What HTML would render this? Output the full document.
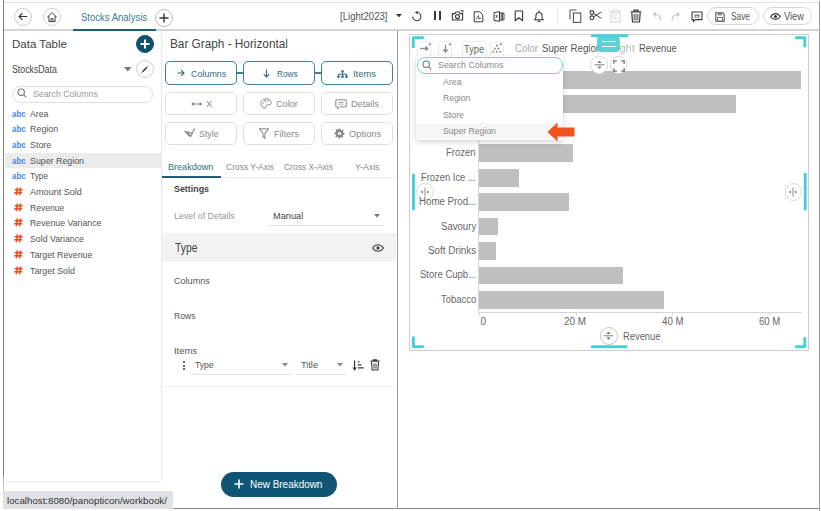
<!DOCTYPE html>
<html><head><meta charset="utf-8"><style>
html,body{margin:0;padding:0;}
body{width:821px;height:511px;position:relative;overflow:hidden;background:#fff;font-family:"Liberation Sans", sans-serif;}
.a{position:absolute;white-space:nowrap;box-sizing:content-box;}
svg.a{overflow:visible;}
</style></head><body>
<div class="a" style="left:4px;top:2px;width:815px;height:1px;background:#e4e4e4;"></div>
<div class="a" style="left:3px;top:0px;width:1px;height:477px;background:#7c7c7c;"></div>
<div class="a" style="left:3px;top:477px;width:1px;height:15px;background:#bdbdbd;"></div>
<div class="a" style="left:819px;top:1px;width:1px;height:510px;background:#9e9e9e;"></div>
<div class="a" style="left:173px;top:508px;width:647px;height:1px;background:#8a8a8a;"></div>
<div class="a" style="left:4px;top:29px;width:815px;height:2px;background:#d4d4d4;"></div>
<div class="a" style="left:13.50px;top:7.70px;width:16.00px;height:16.00px;border:1px solid #cfcfcf;border-radius:50%;background:#fff;"></div>
<div class="a" style="left:42.50px;top:7.70px;width:16.00px;height:16.00px;border:1px solid #cfcfcf;border-radius:50%;background:#fff;"></div>
<div class="a" style="left:155.00px;top:8.50px;width:16.00px;height:16.00px;border:1px solid #bbb;border-radius:50%;background:#fff;"></div>
<svg class="a" style="left:17px;top:11px;" width="12" height="11" viewBox="0 0 12 11"><path d="M2 5.5H10.2M5.4 2.2L2 5.5L5.4 8.8" stroke="#333" stroke-width="1.1" fill="none"/></svg>
<svg class="a" style="left:45.5px;top:11px;" width="12" height="12" viewBox="0 0 12 12"><path d="M1.2 6.4L6 1.6L10.8 6.4M2.9 4.9V10.6H9.1V4.9M5 10.6V7.6H7V10.6" stroke="#333" stroke-width=".9" fill="none"/></svg>
<svg class="a" style="left:158px;top:11.5px;" width="12" height="12" viewBox="0 0 12 12"><path d="M6 1.5V10.5M1.5 6H10.5" stroke="#333" stroke-width="1.4" fill="none"/></svg>
<div class="a" style="left:81.20px;top:13px;font-size:10px;line-height:10px;color:#3b7a92;font-weight:normal;transform:scaleX(0.9515);transform-origin:0 0;">Stocks Analysis</div>
<div class="a" style="left:73px;top:29px;width:83px;height:2px;background:#1f5f78;"></div>
<div class="a" style="left:339.50px;top:12px;font-size:10px;line-height:10px;color:#555;font-weight:normal;transform:scaleX(0.9598);transform-origin:0 0;">[Light2023]</div>
<svg class="a" style="left:396px;top:13.8px;" width="6" height="3.2" viewBox="0 0 6 3.2"><path d="M0 0H6L3 3.2Z" fill="#333"/></svg>
<div class="a" style="left:730.60px;top:12px;font-size:10px;line-height:10px;color:#555;font-weight:normal;transform:scaleX(0.8337);transform-origin:0 0;">Save</div>
<div class="a" style="left:784.00px;top:12px;font-size:10px;line-height:10px;color:#555;font-weight:normal;transform:scaleX(0.9294);transform-origin:0 0;">View</div>
<div class="a" style="left:707.4px;top:7.3px;width:49.2px;height:16px;border:1px solid #d6d6d6;border-radius:9px;"></div>
<div class="a" style="left:762.9px;top:7.3px;width:47.4px;height:16px;border:1px solid #d6d6d6;border-radius:9px;"></div>
<div class="a" style="left:161px;top:31px;width:1px;height:450px;background:#e8e8e8;"></div>
<div class="a" style="left:12.25px;top:39px;font-size:11.5px;line-height:11.5px;color:#444;font-weight:normal;transform:scaleX(1.0032);transform-origin:0 0;">Data Table</div>
<div class="a" style="left:135.80px;top:34.90px;width:16.00px;height:16.00px;border:1px solid #11506b;border-radius:50%;background:#11506b;"></div>
<svg class="a" style="left:139px;top:38px;" width="12" height="12" viewBox="0 0 12 12"><path d="M6 1.5V10.5M1.5 6H10.5" stroke="#fff" stroke-width="2" fill="none"/></svg>
<div class="a" style="left:11.70px;top:65px;font-size:10px;line-height:10px;color:#444;font-weight:normal;transform:scaleX(0.8760);transform-origin:0 0;">StocksData</div>
<svg class="a" style="left:123.8px;top:66.5px;" width="7.6" height="4.4" viewBox="0 0 7.6 4.4"><path d="M0 0H7.6L3.8 4.4Z" fill="#777"/></svg>
<div class="a" style="left:135.70px;top:60.00px;width:16.00px;height:16.00px;border:1px solid #cfcfcf;border-radius:50%;background:#fff;"></div>
<svg class="a" style="left:139px;top:63px;" width="12" height="12" viewBox="0 0 12 12"><path d="M2 10.2L9.4 2.8" stroke="#555" stroke-width=".8"/><path d="M3.8 8.4L7.6 4.6" stroke="#333" stroke-width="1.4"/></svg>
<div class="a" style="left:12px;top:85.5px;width:139px;height:15px;border:1px solid #dedede;border-radius:9px;"></div>
<svg class="a" style="left:17px;top:88px;" width="10" height="10" viewBox="0 0 10 10"><circle cx="4.2" cy="4.2" r="3.2" stroke="#777" stroke-width="1.1" fill="none"/><path d="M6.6 6.6L9.3 9.3" stroke="#777" stroke-width="1.1"/></svg>
<div class="a" style="left:32.70px;top:89px;font-size:9.5px;line-height:9.5px;color:#9a9a9a;font-weight:normal;transform:scaleX(0.9228);transform-origin:0 0;">Search Columns</div>
<div class="a" style="left:5px;top:153px;width:156px;height:15px;background:#ebebeb;"></div>
<div class="a" style="left:11.90px;top:110px;font-size:9px;line-height:9px;color:#4a86e8;font-weight:bold;transform:scaleX(0.8899);transform-origin:0 0;">abc</div>
<div class="a" style="left:30.00px;top:109px;font-size:9.5px;line-height:9.5px;color:#555;font-weight:normal;transform:scaleX(0.9166);transform-origin:0 0;">Area</div>
<div class="a" style="left:11.90px;top:125px;font-size:9px;line-height:9px;color:#4a86e8;font-weight:bold;transform:scaleX(0.8899);transform-origin:0 0;">abc</div>
<div class="a" style="left:30.00px;top:124px;font-size:9.5px;line-height:9.5px;color:#555;font-weight:normal;transform:scaleX(0.9400);transform-origin:0 0;">Region</div>
<div class="a" style="left:11.90px;top:141px;font-size:9px;line-height:9px;color:#4a86e8;font-weight:bold;transform:scaleX(0.8899);transform-origin:0 0;">abc</div>
<div class="a" style="left:30.00px;top:140px;font-size:9.5px;line-height:9.5px;color:#555;font-weight:normal;transform:scaleX(0.9337);transform-origin:0 0;">Store</div>
<div class="a" style="left:11.90px;top:157px;font-size:9px;line-height:9px;color:#4a86e8;font-weight:bold;transform:scaleX(0.8899);transform-origin:0 0;">abc</div>
<div class="a" style="left:30.00px;top:156px;font-size:9.5px;line-height:9.5px;color:#555;font-weight:normal;transform:scaleX(0.9296);transform-origin:0 0;">Super Region</div>
<div class="a" style="left:11.90px;top:172px;font-size:9px;line-height:9px;color:#4a86e8;font-weight:bold;transform:scaleX(0.8899);transform-origin:0 0;">abc</div>
<div class="a" style="left:30.00px;top:171px;font-size:9.5px;line-height:9.5px;color:#555;font-weight:normal;transform:scaleX(0.8837);transform-origin:0 0;">Type</div>
<svg class="a" style="left:14px;top:187px;" width="9" height="8.5" viewBox="0 0 9 8.5"><path d="M3.4 0.3L2.4 8.2M6.6 0.3L5.6 8.2M0.6 2.7H8.6M0.2 5.7H8.2" stroke="#f24e22" stroke-width="1.6" fill="none"/></svg>
<div class="a" style="left:30.00px;top:187px;font-size:9.5px;line-height:9.5px;color:#555;font-weight:normal;transform:scaleX(0.9541);transform-origin:0 0;">Amount Sold</div>
<svg class="a" style="left:14px;top:203px;" width="9" height="8.5" viewBox="0 0 9 8.5"><path d="M3.4 0.3L2.4 8.2M6.6 0.3L5.6 8.2M0.6 2.7H8.6M0.2 5.7H8.2" stroke="#f24e22" stroke-width="1.6" fill="none"/></svg>
<div class="a" style="left:30.00px;top:203px;font-size:9.5px;line-height:9.5px;color:#555;font-weight:normal;transform:scaleX(0.9046);transform-origin:0 0;">Revenue</div>
<svg class="a" style="left:14px;top:218px;" width="9" height="8.5" viewBox="0 0 9 8.5"><path d="M3.4 0.3L2.4 8.2M6.6 0.3L5.6 8.2M0.6 2.7H8.6M0.2 5.7H8.2" stroke="#f24e22" stroke-width="1.6" fill="none"/></svg>
<div class="a" style="left:30.00px;top:218px;font-size:9.5px;line-height:9.5px;color:#555;font-weight:normal;transform:scaleX(0.9231);transform-origin:0 0;">Revenue Variance</div>
<svg class="a" style="left:14px;top:234px;" width="9" height="8.5" viewBox="0 0 9 8.5"><path d="M3.4 0.3L2.4 8.2M6.6 0.3L5.6 8.2M0.6 2.7H8.6M0.2 5.7H8.2" stroke="#f24e22" stroke-width="1.6" fill="none"/></svg>
<div class="a" style="left:30.00px;top:234px;font-size:9.5px;line-height:9.5px;color:#555;font-weight:normal;transform:scaleX(0.9240);transform-origin:0 0;">Sold Variance</div>
<svg class="a" style="left:14px;top:250px;" width="9" height="8.5" viewBox="0 0 9 8.5"><path d="M3.4 0.3L2.4 8.2M6.6 0.3L5.6 8.2M0.6 2.7H8.6M0.2 5.7H8.2" stroke="#f24e22" stroke-width="1.6" fill="none"/></svg>
<div class="a" style="left:30.00px;top:250px;font-size:9.5px;line-height:9.5px;color:#555;font-weight:normal;transform:scaleX(0.9304);transform-origin:0 0;">Target Revenue</div>
<svg class="a" style="left:14px;top:266px;" width="9" height="8.5" viewBox="0 0 9 8.5"><path d="M3.4 0.3L2.4 8.2M6.6 0.3L5.6 8.2M0.6 2.7H8.6M0.2 5.7H8.2" stroke="#f24e22" stroke-width="1.6" fill="none"/></svg>
<div class="a" style="left:30.00px;top:266px;font-size:9.5px;line-height:9.5px;color:#555;font-weight:normal;transform:scaleX(0.9342);transform-origin:0 0;">Target Sold</div>
<div class="a" style="left:5px;top:481px;width:156px;height:1px;background:#ececec;"></div>
<div class="a" style="left:3px;top:491px;width:170px;height:18px;background:#dfe1e5;"></div>
<div class="a" style="left:7.10px;top:496px;font-size:9.5px;line-height:9.5px;color:#333;font-weight:normal;transform:scaleX(1.0228);transform-origin:0 0;">localhost:8080/panopticon/workbook/</div>
<div class="a" style="left:397px;top:31px;width:1px;height:478px;background:#9a9a9a;"></div>
<div class="a" style="left:169.90px;top:38px;font-size:12px;line-height:12px;color:#444;font-weight:normal;transform:scaleX(0.9821);transform-origin:0 0;">Bar Graph - Horizontal</div>
<div class="a" style="left:164.7px;top:61.1px;width:70px;height:22px;border:1px solid #3f7f97;border-radius:5px;"></div>
<div class="a" style="left:243px;top:61.1px;width:70px;height:22px;border:1px solid #3f7f97;border-radius:5px;"></div>
<div class="a" style="left:320.7px;top:61.1px;width:70px;height:22px;border:1px solid #3f7f97;border-radius:5px;"></div>
<div class="a" style="left:236.7px;top:72px;width:6.3px;height:2px;background:#3f7f97;"></div>
<div class="a" style="left:314.7px;top:72px;width:6px;height:2px;background:#3f7f97;"></div>
<div class="a" style="left:164.7px;top:91.9px;width:70px;height:21px;border:1px solid #e0e0e0;border-radius:5px;"></div>
<div class="a" style="left:243px;top:91.9px;width:70px;height:21px;border:1px solid #e0e0e0;border-radius:5px;"></div>
<div class="a" style="left:320.7px;top:91.9px;width:70px;height:21px;border:1px solid #e0e0e0;border-radius:5px;"></div>
<div class="a" style="left:164.7px;top:122px;width:70px;height:21px;border:1px solid #e0e0e0;border-radius:5px;"></div>
<div class="a" style="left:243px;top:122px;width:70px;height:21px;border:1px solid #e0e0e0;border-radius:5px;"></div>
<div class="a" style="left:320.7px;top:122px;width:70px;height:21px;border:1px solid #e0e0e0;border-radius:5px;"></div>
<div class="a" style="left:191.30px;top:69px;font-size:9.5px;line-height:9.5px;color:#2c6a82;font-weight:normal;transform:scaleX(0.9417);transform-origin:0 0;">Columns</div>
<div class="a" style="left:276.50px;top:69px;font-size:9.5px;line-height:9.5px;color:#2c6a82;font-weight:normal;transform:scaleX(0.8670);transform-origin:0 0;">Rows</div>
<div class="a" style="left:353.00px;top:69px;font-size:9.5px;line-height:9.5px;color:#2c6a82;font-weight:normal;transform:scaleX(0.9859);transform-origin:0 0;">Items</div>
<div class="a" style="left:205.90px;top:99px;font-size:9.5px;line-height:9.5px;color:#888;font-weight:normal;">X</div>
<div class="a" style="left:275.50px;top:99px;font-size:9.5px;line-height:9.5px;color:#888;font-weight:normal;transform:scaleX(0.9645);transform-origin:0 0;">Color</div>
<div class="a" style="left:350.60px;top:99px;font-size:9.5px;line-height:9.5px;color:#888;font-weight:normal;transform:scaleX(0.9573);transform-origin:0 0;">Details</div>
<div class="a" style="left:198.90px;top:129px;font-size:9.5px;line-height:9.5px;color:#888;font-weight:normal;transform:scaleX(0.9281);transform-origin:0 0;">Style</div>
<div class="a" style="left:274.00px;top:129px;font-size:9.5px;line-height:9.5px;color:#888;font-weight:normal;transform:scaleX(0.9629);transform-origin:0 0;">Filters</div>
<div class="a" style="left:348.60px;top:129px;font-size:9.5px;line-height:9.5px;color:#888;font-weight:normal;transform:scaleX(0.9836);transform-origin:0 0;">Options</div>
<div class="a" style="left:168.40px;top:162px;font-size:9.5px;line-height:9.5px;color:#2f6f87;font-weight:normal;transform:scaleX(0.9552);transform-origin:0 0;">Breakdown</div>
<div class="a" style="left:225.70px;top:162px;font-size:9.5px;line-height:9.5px;color:#888;font-weight:normal;transform:scaleX(0.8931);transform-origin:0 0;">Cross Y-Axis</div>
<div class="a" style="left:284.30px;top:162px;font-size:9.5px;line-height:9.5px;color:#888;font-weight:normal;transform:scaleX(0.8909);transform-origin:0 0;">Cross X-Axis</div>
<div class="a" style="left:355.00px;top:162px;font-size:9.5px;line-height:9.5px;color:#888;font-weight:normal;transform:scaleX(0.9220);transform-origin:0 0;">Y-Axis</div>
<div class="a" style="left:162px;top:177px;width:234px;height:1px;background:#ececec;"></div>
<div class="a" style="left:162px;top:176px;width:59px;height:2px;background:#1f5f78;"></div>
<div class="a" style="left:174.40px;top:184px;font-size:9.5px;line-height:9.5px;color:#444;font-weight:bold;transform:scaleX(0.9339);transform-origin:0 0;">Settings</div>
<div class="a" style="left:174.40px;top:211px;font-size:9.5px;line-height:9.5px;color:#999;font-weight:normal;transform:scaleX(0.9361);transform-origin:0 0;">Level of Details</div>
<div class="a" style="left:272.80px;top:211px;font-size:9.5px;line-height:9.5px;color:#444;font-weight:normal;transform:scaleX(0.9692);transform-origin:0 0;">Manual</div>
<div class="a" style="left:268.4px;top:224.6px;width:116px;height:1.2px;background:#e0e0e0;"></div>
<svg class="a" style="left:374px;top:214px;" width="6" height="3.5" viewBox="0 0 6 3.5"><path d="M0 0H6L3 3.5Z" fill="#777"/></svg>
<div class="a" style="left:162px;top:233px;width:234px;height:29px;background:#f2f2f2;"></div>
<div class="a" style="left:174.70px;top:242px;font-size:12px;line-height:12px;color:#444;font-weight:normal;transform:scaleX(0.8649);transform-origin:0 0;">Type</div>
<div class="a" style="left:174.40px;top:276px;font-size:9.5px;line-height:9.5px;color:#555;font-weight:normal;transform:scaleX(0.9550);transform-origin:0 0;">Columns</div>
<div class="a" style="left:174.40px;top:311px;font-size:9.5px;line-height:9.5px;color:#555;font-weight:normal;transform:scaleX(0.9049);transform-origin:0 0;">Rows</div>
<div class="a" style="left:174.40px;top:346px;font-size:9.5px;line-height:9.5px;color:#555;font-weight:normal;transform:scaleX(0.9902);transform-origin:0 0;">Items</div>
<div class="a" style="left:195.30px;top:360px;font-size:9.5px;line-height:9.5px;color:#555;font-weight:normal;transform:scaleX(0.8982);transform-origin:0 0;">Type</div>
<div class="a" style="left:190.8px;top:373.5px;width:101.5px;height:1.2px;background:#e2e2e2;"></div>
<div class="a" style="left:300.70px;top:360px;font-size:9.5px;line-height:9.5px;color:#555;font-weight:normal;transform:scaleX(0.9662);transform-origin:0 0;">Title</div>
<div class="a" style="left:296.2px;top:373.5px;width:51px;height:1.2px;background:#e2e2e2;"></div>
<div class="a" style="left:162px;top:386px;width:235px;height:1px;background:#f0f0f0;"></div>
<div class="a" style="left:221.4px;top:472px;width:116px;height:25px;border-radius:13px;background:#0f5674;"></div>
<svg class="a" style="left:234px;top:479px;" width="10" height="10" viewBox="0 0 10 10"><path d="M5 0.5V9.5M0.5 5H9.5" stroke="#fff" stroke-width="1.6" fill="none"/></svg>
<div class="a" style="left:249.60px;top:480px;font-size:10px;line-height:10px;color:#fff;font-weight:normal;transform:scaleX(0.9944);transform-origin:0 0;">New Breakdown</div>
<div class="a" style="left:409px;top:33.6px;width:397.6px;height:315.5px;border:1px solid #cdcdcd;"></div>
<div class="a" style="left:416.40px;top:182.80px;width:15.40px;height:15.40px;border:1px solid #d8d8d8;border-radius:50%;background:#fff;"></div>
<div class="a" style="left:784.60px;top:183.20px;width:15.40px;height:15.40px;border:1px solid #d8d8d8;border-radius:50%;background:#fff;"></div>
<div class="a" style="left:479px;top:71.0px;width:322px;height:17.8px;background:#bfbfbf;"></div>
<div class="a" style="left:479px;top:95.45px;width:257.2px;height:17.8px;background:#bfbfbf;"></div>
<div class="a" style="left:479px;top:119.9px;width:66px;height:17.8px;background:#bfbfbf;"></div>
<div class="a" style="left:479px;top:144.35px;width:94px;height:17.8px;background:#bfbfbf;"></div>
<div class="a" style="left:446.40px;top:148px;font-size:10px;line-height:10px;color:#666;font-weight:normal;transform:scaleX(0.9512);transform-origin:0 0;">Frozen</div>
<div class="a" style="left:479px;top:168.8px;width:39.8px;height:17.8px;background:#bfbfbf;"></div>
<div class="a" style="left:421.30px;top:173px;font-size:10px;line-height:10px;color:#666;font-weight:normal;transform:scaleX(0.9374);transform-origin:0 0;">Frozen Ice ...</div>
<div class="a" style="left:479px;top:193.25px;width:90px;height:17.8px;background:#bfbfbf;"></div>
<div class="a" style="left:418.90px;top:197px;font-size:10px;line-height:10px;color:#666;font-weight:normal;transform:scaleX(0.9693);transform-origin:0 0;">Home Prod...</div>
<div class="a" style="left:479px;top:217.7px;width:19.3px;height:17.8px;background:#bfbfbf;"></div>
<div class="a" style="left:440.80px;top:222px;font-size:10px;line-height:10px;color:#666;font-weight:normal;transform:scaleX(0.9597);transform-origin:0 0;">Savoury</div>
<div class="a" style="left:479px;top:242.15px;width:17px;height:17.8px;background:#bfbfbf;"></div>
<div class="a" style="left:427.80px;top:246px;font-size:10px;line-height:10px;color:#666;font-weight:normal;transform:scaleX(0.9857);transform-origin:0 0;">Soft Drinks</div>
<div class="a" style="left:479px;top:266.6px;width:143.9px;height:17.8px;background:#bfbfbf;"></div>
<div class="a" style="left:419.90px;top:270px;font-size:10px;line-height:10px;color:#666;font-weight:normal;transform:scaleX(0.9521);transform-origin:0 0;">Store Cupb...</div>
<div class="a" style="left:479px;top:291.05px;width:185.3px;height:17.8px;background:#bfbfbf;"></div>
<div class="a" style="left:440.80px;top:295px;font-size:10px;line-height:10px;color:#666;font-weight:normal;transform:scaleX(0.9450);transform-origin:0 0;">Tobacco</div>
<div class="a" style="left:478px;top:66px;width:1px;height:247px;background:#d6d6d6;"></div>
<div class="a" style="left:478px;top:312px;width:324px;height:1px;background:#d6d6d6;"></div>
<div class="a" style="left:478.5px;top:313px;width:1px;height:2.5px;background:#dadada;"></div>
<div class="a" style="left:480.50px;top:317px;font-size:10px;line-height:10px;color:#666;font-weight:normal;">0</div>
<div class="a" style="left:575.5px;top:313px;width:1px;height:2.5px;background:#dadada;"></div>
<div class="a" style="left:564.00px;top:317px;font-size:10px;line-height:10px;color:#666;font-weight:normal;transform:scaleX(0.9897);transform-origin:0 0;">20 M</div>
<div class="a" style="left:672.4px;top:313px;width:1px;height:2.5px;background:#dadada;"></div>
<div class="a" style="left:662.40px;top:317px;font-size:10px;line-height:10px;color:#666;font-weight:normal;transform:scaleX(0.9717);transform-origin:0 0;">40 M</div>
<div class="a" style="left:769.3px;top:313px;width:1px;height:2.5px;background:#dadada;"></div>
<div class="a" style="left:758.70px;top:317px;font-size:10px;line-height:10px;color:#666;font-weight:normal;transform:scaleX(0.9582);transform-origin:0 0;">60 M</div>
<div class="a" style="left:599.60px;top:326.50px;width:16.00px;height:16.00px;border:1px solid #c8c8c8;border-radius:50%;background:#fff;"></div>
<div class="a" style="left:622.60px;top:332px;font-size:10px;line-height:10px;color:#666;font-weight:normal;transform:scaleX(0.9368);transform-origin:0 0;">Revenue</div>
<div class="a" style="left:515.00px;top:44px;font-size:10px;line-height:10px;color:#aaa;font-weight:normal;transform:scaleX(0.9623);transform-origin:0 0;">Color</div>
<div class="a" style="left:542.40px;top:44px;font-size:10px;line-height:10px;color:#555;font-weight:normal;transform:scaleX(0.9681);transform-origin:0 0;">Super Region</div>
<div class="a" style="left:603.40px;top:44px;font-size:10px;line-height:10px;color:#bbb;font-weight:normal;transform:scaleX(1.1000);transform-origin:0 0;">Height</div>
<div class="a" style="left:639.30px;top:44px;font-size:10px;line-height:10px;color:#555;font-weight:normal;transform:scaleX(0.9418);transform-origin:0 0;">Revenue</div>
<div class="a" style="left:417px;top:41px;width:12.0px;height:16px;border:1px solid #ececec;border-radius:3px;"></div>
<div class="a" style="left:437.8px;top:41px;width:12.7px;height:16px;border:1px solid #ececec;border-radius:3px;"></div>
<div class="a" style="left:461.9px;top:41px;width:22.8px;height:16px;border:1px solid #ececec;border-radius:3px;"></div>
<div class="a" style="left:489.7px;top:41px;width:12.3px;height:16px;border:1px solid #ececec;border-radius:3px;"></div>
<div class="a" style="left:464.20px;top:45px;font-size:10px;line-height:10px;color:#666;font-weight:normal;transform:scaleX(0.9271);transform-origin:0 0;">Type</div>
<div class="a" style="left:590.40px;top:56.20px;width:15.40px;height:15.40px;border:1px solid #d8d8d8;border-radius:50%;background:#fff;"></div>
<div class="a" style="left:609.90px;top:56.20px;width:15.40px;height:15.40px;border:1px solid #d8d8d8;border-radius:50%;background:#fff;"></div>
<svg class="a" style="left:0;top:0" width="821" height="511"><g stroke="#46cfd7" stroke-width="2.9" fill="none" stroke-linecap="round" stroke-linejoin="round"><path d="M422.6 37.8H413.3V46.8M796.4 37.8H804.8V46.2M413.4 337.6V346.7H422.7M804.8 338.4V346.7H796.2M592.2 35.7H627M592.3 346.8H626.2M413.5 175.1V209.1M805.2 174.2V209.2"/></g></svg>
<div class="a" style="left:597.4px;top:36px;width:23.1px;height:16px;border-radius:4.5px;background:#4fcdd5;opacity:.93"></div>
<div class="a" style="left:602px;top:41px;width:14px;height:1.4px;background:#fff;"></div>
<div class="a" style="left:602px;top:45.6px;width:14px;height:1.4px;background:#fff;"></div>
<div class="a" style="left:416px;top:56px;width:147.3px;height:84px;background:#fff;box-shadow:0 2px 6px rgba(0,0,0,.18);"></div>
<div class="a" style="left:416px;top:123.3px;width:147.3px;height:15.7px;background:#f5f5f5;"></div>
<div class="a" style="left:417px;top:56.8px;width:143.8px;height:15.2px;border:1px solid #6dd3d9;border-radius:8px;background:#fff;"></div>
<svg class="a" style="left:422px;top:59.5px;" width="10" height="10" viewBox="0 0 10 10"><circle cx="4.2" cy="4.2" r="3.2" stroke="#777" stroke-width="1.1" fill="none"/><path d="M6.6 6.6L9.3 9.3" stroke="#777" stroke-width="1.1"/></svg>
<div class="a" style="left:438.20px;top:60px;font-size:9.5px;line-height:9.5px;color:#888;font-weight:normal;transform:scaleX(0.9299);transform-origin:0 0;">Search Columns</div>
<div class="a" style="left:442.70px;top:77px;font-size:9.5px;line-height:9.5px;color:#888;font-weight:normal;transform:scaleX(0.9316);transform-origin:0 0;">Area</div>
<div class="a" style="left:442.70px;top:93px;font-size:9.5px;line-height:9.5px;color:#888;font-weight:normal;transform:scaleX(0.9101);transform-origin:0 0;">Region</div>
<div class="a" style="left:442.70px;top:110px;font-size:9.5px;line-height:9.5px;color:#888;font-weight:normal;transform:scaleX(0.9205);transform-origin:0 0;">Store</div>
<div class="a" style="left:442.70px;top:126px;font-size:9.5px;line-height:9.5px;color:#888;font-weight:normal;transform:scaleX(0.9106);transform-origin:0 0;">Super Region</div>
<svg class="a" style="left:547px;top:122px;" width="28" height="20" viewBox="0 0 28 20"><path d="M0.5 10L10.5 0.5V5.5H27.5V14.5H10.5V19.5Z" fill="#f2521f"/></svg>
<svg class="a" style="left:411px;top:10px;" width="12" height="12" viewBox="0 0 12 12"><path d="M6.2 2.5A4.1 4.1 0 1 1 1.7 6.6" stroke="#3a3a3a" stroke-width="1.1" fill="none"/><path d="M3.9 2.5L6.6 0.7V4.3Z" fill="#3a3a3a"/></svg>
<div class="a" style="left:433.8px;top:11.3px;width:2.3px;height:8.3px;background:#3a3a3a;"></div>
<div class="a" style="left:438.6px;top:11.3px;width:2.3px;height:8.3px;background:#3a3a3a;"></div>
<svg class="a" style="left:451px;top:10px;" width="13" height="11" viewBox="0 0 13 11"><path d="M1.4 3.6H4L5 2H8L9 3.6H11.6V10H1.4Z" stroke="#3a3a3a" stroke-width="1.1" fill="none"/><circle cx="6.5" cy="6.6" r="2" stroke="#3a3a3a" stroke-width="1.1" fill="none"/><path d="M9.6 0.8H11.8V2.6" stroke="#3a3a3a" stroke-width="1.1" fill="none"/></svg>
<svg class="a" style="left:472.5px;top:10.5px;" width="11" height="12" viewBox="0 0 11 12"><path d="M1.2 0.8H6.8L9.8 3.8V10.8H1.2Z" stroke="#3a3a3a" stroke-width="1" fill="none"/><path d="M3 8.5L5.5 4.5L6 8L8 7" stroke="#3a3a3a" stroke-width=".8" fill="none"/></svg>
<svg class="a" style="left:492.5px;top:10.5px;" width="12" height="11" viewBox="0 0 12 11"><path d="M1 1.6L6.5 0.6V10.4L1 9.4Z" stroke="#3a3a3a" stroke-width="1" fill="none"/><path d="M6.5 2H11V9H6.5M8.2 2V9M9.6 2V9" stroke="#3a3a3a" stroke-width=".9" fill="none"/><path d="M2.6 3.8L4.6 6.8M4.6 3.8L2.6 6.8" stroke="#3a3a3a" stroke-width=".8"/></svg>
<svg class="a" style="left:513.5px;top:9.5px;" width="10" height="12" viewBox="0 0 10 12"><path d="M1.2 1H8.6V10.8L4.9 7.8L1.2 10.8Z" stroke="#3a3a3a" stroke-width="1.1" fill="none" stroke-linejoin="round"/></svg>
<svg class="a" style="left:532.5px;top:9.5px;" width="12" height="12" viewBox="0 0 12 12"><path d="M1 9.8H11M2.3 9.8C3 8.5 3 7 3 5.5A3 3 0 0 1 9 5.5C9 7 9 8.5 9.7 9.8M6 0.6V2.4M4.8 10.6A1.2 1.2 0 0 0 7.2 10.6" stroke="#3a3a3a" stroke-width="1.1" fill="none"/></svg>
<div class="a" style="left:557px;top:10.3px;width:1px;height:11.7px;background:#e2e2e2;"></div>
<svg class="a" style="left:568.5px;top:8.5px;" width="13" height="14" viewBox="0 0 13 14"><path d="M1 10.5V1H7.5" stroke="#555" stroke-width="1" fill="none"/><rect x="4.4" y="4" width="7.4" height="9.4" stroke="#444" stroke-width="1" fill="none"/></svg>
<svg class="a" style="left:588.5px;top:10px;" width="13" height="10.5" viewBox="0 0 13 10.5"><circle cx="2.9" cy="2.5" r="1.9" stroke="#3a3a3a" stroke-width="1.1" fill="none"/><circle cx="2.9" cy="7.8" r="1.9" stroke="#3a3a3a" stroke-width="1.1" fill="none"/><path d="M4.6 3.4L12.3 8.4M4.6 6.9L12.3 1.9" stroke="#3a3a3a" stroke-width="1" fill="none"/></svg>
<svg class="a" style="left:610px;top:8.5px;" width="11" height="14" viewBox="0 0 11 14"><path d="M2.5 2.5H1V13H10V2.5H8.5" stroke="#d2d2d2" stroke-width="1.1" fill="none"/><rect x="3.2" y="1" width="4.6" height="2.6" stroke="#d2d2d2" stroke-width="1" fill="none"/><path d="M3.2 6H7.5M3.2 8H6.5M3.2 10H7.5" stroke="#d2d2d2" stroke-width=".9"/></svg>
<svg class="a" style="left:629.8px;top:8.5px;" width="12" height="14" viewBox="0 0 12 14"><path d="M0.6 2.8H11.4M4 2.8V1.2H8V2.8" stroke="#3a3a3a" stroke-width="1.3" fill="none"/><path d="M1.8 3.6L2.5 13H9.5L10.2 3.6" stroke="#3a3a3a" stroke-width="1.2" fill="none"/><path d="M4.2 5V11.5M6 5V11.5M7.8 5V11.5" stroke="#3a3a3a" stroke-width=".9"/></svg>
<svg class="a" style="left:651.8px;top:10.5px;" width="10" height="10" viewBox="0 0 10 10"><path d="M8.6 9.6C8.6 6 6.6 3.4 3 3.4" stroke="#c9c9c9" stroke-width="1.2" fill="none"/><path d="M0.6 3.4L4 0.6V6.2Z" fill="#c9c9c9"/></svg>
<svg class="a" style="left:671.4px;top:10.5px;" width="10" height="10" viewBox="0 0 10 10"><path d="M1.2 9.6C1.2 6 3.2 3.4 6.8 3.4" stroke="#c9c9c9" stroke-width="1.2" fill="none"/><path d="M9.2 3.4L5.8 0.6V6.2Z" fill="#c9c9c9"/></svg>
<svg class="a" style="left:690.5px;top:10.5px;" width="12" height="12" viewBox="0 0 12 12"><path d="M1 1H11V8.6H4.2L2.4 10.6V8.6H1Z" stroke="#3a3a3a" stroke-width="1.1" fill="none" stroke-linejoin="round"/><path d="M3.5 4.2H8.5M3.5 6H5.5M6.5 6H8.5" stroke="#3a3a3a" stroke-width="1"/></svg>
<svg class="a" style="left:714.8px;top:11.5px;" width="10" height="10" viewBox="0 0 10 10"><path d="M0.8 0.8H7.6L9.2 2.4V9.2H0.8Z" stroke="#555" stroke-width="1.1" fill="none"/><rect x="2.6" y="0.8" width="4.4" height="2.6" fill="#888"/><rect x="2.6" y="5.4" width="4.8" height="3.8" stroke="#666" stroke-width=".9" fill="none"/></svg>
<svg class="a" style="left:769.8px;top:12.6px;" width="11" height="7" viewBox="0 0 11 7"><path d="M0.6 3.5C2 1.4 3.6 0.6 5.5 0.6C7.4 0.6 9 1.4 10.4 3.5C9 5.6 7.4 6.4 5.5 6.4C3.6 6.4 2 5.6 0.6 3.5Z" stroke="#3a3a3a" stroke-width="1.1" fill="none"/><circle cx="5.5" cy="3.5" r="1.6" fill="#3a3a3a"/></svg>
<svg class="a" style="left:177px;top:69px;" width="8" height="8" viewBox="0 0 8 8"><path d="M0.5 4H7M4.2 1.2L7 4L4.2 6.8" stroke="#2c6a82" stroke-width="1.1" fill="none"/></svg>
<svg class="a" style="left:262.5px;top:69px;" width="7" height="9" viewBox="0 0 7 9"><path d="M3.5 0.5V8M0.7 5.2L3.5 8L6.3 5.2" stroke="#2c6a82" stroke-width="1.1" fill="none"/></svg>
<svg class="a" style="left:337px;top:70px;" width="11" height="8" viewBox="0 0 11 8"><rect x="4.3" y="0.3" width="2.4" height="2.2" fill="#2c6a82"/><path d="M5.5 2.5V4.2M1.5 6V4.2H9.5V6M5.5 4.2V6" stroke="#2c6a82" stroke-width="1" fill="none"/><rect x="0.3" y="5.6" width="2.4" height="2.2" fill="#2c6a82"/><rect x="4.3" y="5.6" width="2.4" height="2.2" fill="#2c6a82"/><rect x="8.3" y="5.6" width="2.4" height="2.2" fill="#2c6a82"/></svg>
<svg class="a" style="left:190.5px;top:100.5px;" width="11.5" height="6" viewBox="0 0 11.5 6"><path d="M1 3H10.5" stroke="#8a8a8a" stroke-width="1.1"/><path d="M0.2 3L2.8 0.8V5.2Z M11.3 3L8.7 0.8V5.2Z" fill="#8a8a8a"/></svg>
<svg class="a" style="left:259.8px;top:98px;" width="12" height="11" viewBox="0 0 12 11"><path d="M6 0.8C3 0.8 0.8 3 0.8 5.6C0.8 8.2 2.8 10.2 5.2 10.2C6.2 10.2 6 8.8 6 8.2C6 7.2 6.8 6.8 7.6 6.8H9C10.4 6.8 11.2 6 11.2 4.8C11.2 2.4 9 0.8 6 0.8Z" stroke="#8a8a8a" stroke-width="1" fill="none"/><circle cx="3.4" cy="5" r=".8" fill="#8a8a8a"/><circle cx="5" cy="2.9" r=".8" fill="#8a8a8a"/><circle cx="7.6" cy="3" r=".8" fill="#8a8a8a"/></svg>
<svg class="a" style="left:335px;top:98.5px;" width="12" height="11" viewBox="0 0 12 11"><path d="M0.8 0.8H11.2V7.8H4.6L2.4 10V7.8H0.8Z" stroke="#8a8a8a" stroke-width="1" fill="none" stroke-linejoin="round"/><path d="M3.6 3.4H8.4M3.6 5.2H5.4M6.6 5.2H8.4" stroke="#8a8a8a" stroke-width=".9"/></svg>
<svg class="a" style="left:183.5px;top:128.2px;" width="12" height="10" viewBox="0 0 12 10"><path d="M0.8 3.4L6.8 8.6L8.4 5.4Z" stroke="#8a8a8a" stroke-width="1.1" fill="none" stroke-linejoin="round"/><path d="M7.4 5.6L10.6 1.2M9.6 0.6L11.2 2" stroke="#8a8a8a" stroke-width="1.1" fill="none"/><path d="M3 5.4L6.4 8" stroke="#8a8a8a" stroke-width="2"/></svg>
<svg class="a" style="left:259px;top:128.2px;" width="10" height="11" viewBox="0 0 10 11"><path d="M0.6 0.8H9.4L6 5.4V10.2L4 8.8V5.4Z" stroke="#8a8a8a" stroke-width="1.1" fill="none" stroke-linejoin="round"/></svg>
<svg class="a" style="left:333.5px;top:128.2px;" width="11" height="11" viewBox="0 0 11 11"><g transform="translate(5.5 5.5)"><path d="M-1 -5.2H1L1.3 -3.6L2.7 -3L4 -4L5.2 -2.6L4.2 -1.4L4.6 0L6 .4V2.4L4.4 2.7L3.8 4L4.8 5.2L3.4 6.3L2.2 5.2L1 5.6L0.8 7.2H-1L-1.3 5.6L-2.6 5L-3.9 6L-5.2 4.6L-4.2 3.4L-4.8 2L-6.2 1.7V-0.3L-4.7 -0.6L-4.1 -2L-5 -3.3L-3.6 -4.6L-2.4 -3.6L-1.2 -4.1Z" transform="scale(.82) translate(0 -1)" fill="#8a8a8a"/><circle cx="0" cy="0" r="1.6" fill="#fff"/></g></svg>
<svg class="a" style="left:371.5px;top:243.5px;" width="12" height="8" viewBox="0 0 12 8"><path d="M0.6 4C2 1.6 3.8 0.7 6 0.7C8.2 0.7 10 1.6 11.4 4C10 6.4 8.2 7.3 6 7.3C3.8 7.3 2 6.4 0.6 4Z" stroke="#444" stroke-width="1.1" fill="none"/><circle cx="6" cy="4" r="1.7" fill="#444"/></svg>
<div class="a" style="left:183px;top:360.70000000000005px;width:2px;height:2px;background:#333;border-radius:1px;"></div>
<div class="a" style="left:183px;top:364.5px;width:2px;height:2px;background:#333;border-radius:1px;"></div>
<div class="a" style="left:183px;top:368.3px;width:2px;height:2px;background:#333;border-radius:1px;"></div>
<svg class="a" style="left:282px;top:363px;" width="6" height="3.5" viewBox="0 0 6 3.5"><path d="M0 0H6L3 3.5Z" fill="#888"/></svg>
<svg class="a" style="left:337px;top:363px;" width="6" height="3.5" viewBox="0 0 6 3.5"><path d="M0 0H6L3 3.5Z" fill="#888"/></svg>
<svg class="a" style="left:351.5px;top:359.5px;" width="12.5" height="11.5" viewBox="0 0 12.5 11.5"><path d="M2.6 0.4V10" stroke="#3a3a3a" stroke-width="1.2"/><path d="M0.4 7.6L2.6 10.8L4.8 7.6Z" fill="#3a3a3a"/><path d="M5.8 1.8H7.4M5.8 4.8H9.4M5.8 7.8H11.8" stroke="#3a3a3a" stroke-width="1.3"/></svg>
<svg class="a" style="left:369.5px;top:359.3px;" width="10" height="12" viewBox="0 0 10 12"><path d="M0.5 2.2H9.5M3.4 2.2V0.8H6.6V2.2" stroke="#3a3a3a" stroke-width="1.2" fill="none"/><path d="M1.5 3L2.1 11H7.9L8.5 3" stroke="#3a3a3a" stroke-width="1.1" fill="none"/><path d="M3.8 4.4V9.6M5 4.4V9.6M6.2 4.4V9.6" stroke="#3a3a3a" stroke-width=".7"/></svg>
<svg class="a" style="left:418.5px;top:42px;" width="13" height="11" viewBox="0 0 13 11"><path d="M1 6.5H8.5" stroke="#8c8c8c" stroke-width="1.3"/><path d="M6.4 3.6L9.8 6.5L6.4 9.4Z" fill="#8c8c8c"/><path d="M9.5 2.1H12.3M10.9 0.7V3.5" stroke="#8c8c8c" stroke-width=".9"/></svg>
<svg class="a" style="left:440.5px;top:42px;" width="12" height="12" viewBox="0 0 12 12"><path d="M4.5 2.8V8.5" stroke="#8c8c8c" stroke-width="1.3"/><path d="M1.3 7.6L4.5 11L7.7 7.6Z" fill="#8c8c8c"/><path d="M7.5 2.3H10.3M8.9 0.9V3.7" stroke="#8c8c8c" stroke-width=".9"/></svg>
<svg class="a" style="left:489px;top:41px;" width="15" height="13" viewBox="0 0 15 13"><circle cx="8.0" cy="4.5" r="1.05" fill="#8c8c8c"/><circle cx="5.8" cy="7.6" r="1.05" fill="#8c8c8c"/><circle cx="9.6" cy="7.6" r="1.05" fill="#8c8c8c"/><circle cx="4.2" cy="10.8" r="1.05" fill="#8c8c8c"/><circle cx="7.8" cy="10.8" r="1.05" fill="#8c8c8c"/><circle cx="11.4" cy="10.8" r="1.05" fill="#8c8c8c"/><path d="M10.4 3.2H13.2M11.8 1.8V4.6" stroke="#8c8c8c" stroke-width=".9"/></svg>
<svg class="a" style="left:593.5px;top:60px;" width="11" height="10" viewBox="0 0 11 10"><path d="M3.3 3H7.7L5.5 0.8Z" fill="#6f6f6f"/><path d="M0.6 4.8H10.4" stroke="#6f6f6f" stroke-width=".9"/><path d="M3.3 6.6H7.7L5.5 8.8Z" fill="#6f6f6f"/></svg>
<svg class="a" style="left:613px;top:59.5px;" width="12" height="12" viewBox="0 0 12 12"><path d="M0.9 3.8V0.9H3.8M8.2 0.9H11.1V3.8M11.1 8.2V11.1H8.2M3.8 11.1H0.9V8.2" stroke="#6f6f6f" stroke-width="1.3" fill="none"/></svg>
<svg class="a" style="left:603.1px;top:330.5px;" width="11" height="10" viewBox="0 0 11 10"><path d="M3.3 3H7.7L5.5 0.8Z" fill="#6f6f6f"/><path d="M0.6 4.8H10.4" stroke="#6f6f6f" stroke-width=".9"/><path d="M3.3 6.6H7.7L5.5 8.8Z" fill="#6f6f6f"/></svg>
<svg class="a" style="left:419.5px;top:186.9px;" width="10" height="10" viewBox="0 0 10 10"><path d="M5 0.6V9.6" stroke="#6f6f6f" stroke-width=".8"/><path d="M2.9 3.4V6.6L0.8 5Z M7.1 3.4V6.6L9.2 5Z" fill="#6f6f6f"/></svg>
<svg class="a" style="left:788.3px;top:186.9px;" width="10" height="10" viewBox="0 0 10 10"><path d="M5 0.6V9.6" stroke="#6f6f6f" stroke-width=".8"/><path d="M2.9 3.4V6.6L0.8 5Z M7.1 3.4V6.6L9.2 5Z" fill="#6f6f6f"/></svg>
</body></html>
